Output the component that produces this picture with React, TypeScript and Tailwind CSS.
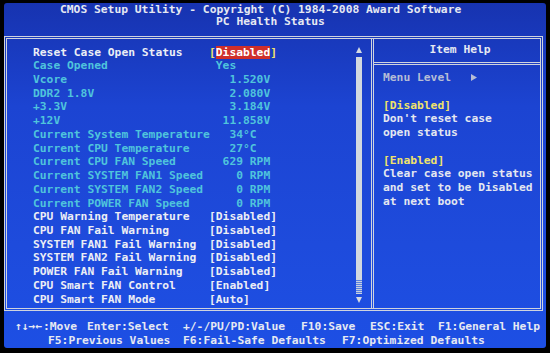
import React from 'react';

type Row = { label: string; value: string; kind: 'selected' | 'info' | 'setting' };

const rows: Row[] = [
  { label: 'Reset Case Open Status', value: 'Disabled', kind: 'selected' },
  { label: 'Case Opened', value: ' Yes', kind: 'info' },
  { label: 'Vcore', value: '   1.520V', kind: 'info' },
  { label: 'DDR2 1.8V', value: '   2.080V', kind: 'info' },
  { label: '+3.3V', value: '   3.184V', kind: 'info' },
  { label: '+12V', value: '  11.858V', kind: 'info' },
  { label: 'Current System Temperature', value: '   34°C', kind: 'info' },
  { label: 'Current CPU Temperature', value: '   27°C', kind: 'info' },
  { label: 'Current CPU FAN Speed', value: '  629 RPM', kind: 'info' },
  { label: 'Current SYSTEM FAN1 Speed', value: '    0 RPM', kind: 'info' },
  { label: 'Current SYSTEM FAN2 Speed', value: '    0 RPM', kind: 'info' },
  { label: 'Current POWER FAN Speed', value: '    0 RPM', kind: 'info' },
  { label: 'CPU Warning Temperature', value: '[Disabled]', kind: 'setting' },
  { label: 'CPU FAN Fail Warning', value: '[Disabled]', kind: 'setting' },
  { label: 'SYSTEM FAN1 Fail Warning', value: '[Disabled]', kind: 'setting' },
  { label: 'SYSTEM FAN2 Fail Warning', value: '[Disabled]', kind: 'setting' },
  { label: 'POWER FAN Fail Warning', value: '[Disabled]', kind: 'setting' },
  { label: 'CPU Smart FAN Control', value: '[Enabled]', kind: 'setting' },
  { label: 'CPU Smart FAN Mode', value: '[Auto]', kind: 'setting' },
];

const help: { text: string; tone: 'yellow' | 'white' }[] = [
  { text: '', tone: 'white' },
  { text: '[Disabled]', tone: 'yellow' },
  { text: "Don't reset case", tone: 'white' },
  { text: 'open status', tone: 'white' },
  { text: '', tone: 'white' },
  { text: '[Enabled]', tone: 'yellow' },
  { text: 'Clear case open status', tone: 'white' },
  { text: 'and set to be Disabled', tone: 'white' },
  { text: 'at next boot', tone: 'white' },
];

const keysTop = [
  { w: 'w-[96px]', text: 'Enter:Select' },
  { w: 'w-[118px]', text: '+/-/PU/PD:Value' },
  { w: 'w-[69px]', text: 'F10:Save' },
  { w: 'w-[68px]', text: 'ESC:Exit' },
  { w: 'w-auto', text: 'F1:General Help' },
];

const keysBottom = [
  { w: 'w-[135px]', text: 'F5:Previous Values' },
  { w: 'w-[159px]', text: 'F6:Fail-Safe Defaults' },
  { w: 'w-auto', text: 'F7:Optimized Defaults' },
];

const App: React.FC = () => {
  return (
    <div className="w-[550px] h-[353px] bg-black pt-[3px] pl-[4px] pr-[4px] pb-[5px] font-['DejaVu_Sans_Mono',monospace] font-bold text-[11.3px] text-[#e6e9f2]">
      <div className="h-full flex flex-col rounded-[3px] bg-[linear-gradient(180deg,#1733b0_0%,#1c44d2_30%,#1e4bdc_70%,#1d4fe4_100%)]">
        {/* Title */}
        <div className="pt-[1px] leading-[12px] whitespace-pre">
          <div className="ml-[56px]">CMOS Setup Utility - Copyright (C) 1984-2008 Award Software</div>
          <div className="ml-[212px]">PC Health Status</div>
        </div>

        {/* Main box */}
        <div className="mt-[8px] mr-[3px] h-[275px] flex border-[3px] border-double border-[#cfd3de]">
          {/* Left panel */}
          <div className="w-[364px] flex">
            <div className="flex-1 pl-[26px] pt-[6.6px]">
              {rows.map((row) => (
                <div key={row.label} className="h-[13.72px] leading-[13.72px] flex whitespace-pre">
                  <span className={`w-[176px] ${row.kind === 'info' ? 'text-[#4fc4dc]' : 'text-[#eceef5]'}`}>
                    {row.label}
                  </span>
                  {row.kind === 'selected' && (
                    <span className="text-[#f0e36a]">
                      [<span className="bg-[#cf2f2a] text-white">{row.value}</span>]
                    </span>
                  )}
                  {row.kind === 'info' && <span className="text-[#4fc4dc]">{row.value}</span>}
                  {row.kind === 'setting' && <span className="text-[#eceef5]">{row.value}</span>}
                </div>
              ))}
            </div>
            {/* Scrollbar */}
            <div className="w-[6px] mr-[9px] pt-[8px] flex flex-col items-center">
              <svg width="6" height="6" viewBox="0 0 6 6">
                <polygon points="3,0 6,6 0,6" fill="#d5dbe2" />
              </svg>
              <div className="mt-[4px] w-[6px] h-[223px] bg-[#d3d9df]" />
              <div className="w-[6px] h-[14px] bg-[repeating-linear-gradient(0deg,#c9d1e0_0px,#c9d1e0_1px,#5b80dc_1px,#5b80dc_2px)]" />
              <svg className="mt-[3px]" width="6" height="6" viewBox="0 0 6 6">
                <polygon points="0,0 6,0 3,6" fill="#d5dbe2" />
              </svg>
            </div>
          </div>

          {/* Right panel */}
          <div className="flex-1 flex flex-col border-l-[3px] border-double border-[#cfd3de]">
            <div className="h-[26px] flex items-center justify-center border-b-[3px] border-double border-[#cfd3de] pl-[6px]">
              Item Help
            </div>
            <div className="pl-[9px] pt-[6px] whitespace-pre">
              <div className="h-[13.75px] leading-[13.75px] text-[#b6bdd6] flex items-center">
                <span className="w-[88px]">Menu Level</span>
                <svg width="6" height="7" viewBox="0 0 6 7">
                  <polygon points="0,0 6,3.5 0,7" fill="#b6bdd6" />
                </svg>
              </div>
              {help.map((h, i) => (
                <div
                  key={i}
                  className={`h-[13.75px] leading-[13.75px] ${
                    h.tone === 'yellow' ? 'text-[#f0e36a]' : 'text-[#e4e7f0]'
                  }`}
                >
                  {h.text}
                </div>
              ))}
            </div>
          </div>
        </div>

        {/* Key bar */}
        <div className="flex-1 pt-[9px] leading-[13.5px] whitespace-pre">
          <div className="flex pl-[11px]">
            <span className="w-[72px] shrink-0 flex">
              <span className="w-[28px]">↑↓→←</span>
              <span>:Move</span>
            </span>
            {keysTop.map((k) => (
              <span key={k.text} className={`${k.w} shrink-0`}>
                {k.text}
              </span>
            ))}
          </div>
          <div className="flex pl-[44px]">
            {keysBottom.map((k) => (
              <span key={k.text} className={`${k.w} shrink-0`}>
                {k.text}
              </span>
            ))}
          </div>
        </div>
      </div>
    </div>
  );
};

export default App;
